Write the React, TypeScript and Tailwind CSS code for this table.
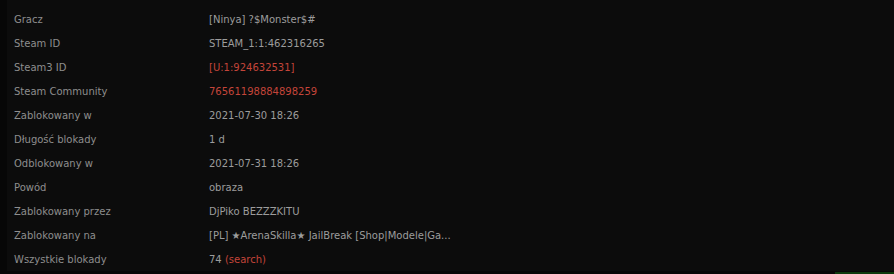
const rows: { label: string; value: React.ReactNode }[] = [
  { label: 'Gracz', value: '[Ninya] ?$Monster$#' },
  { label: 'Steam ID', value: 'STEAM_1:1:462316265' },
  { label: 'Steam3 ID', value: <span className="text-[#c4453a]">[U:1:924632531]</span> },
  { label: 'Steam Community', value: <span className="text-[#c4453a]">76561198884898259</span> },
  { label: 'Zablokowany w', value: '2021-07-30 18:26' },
  { label: 'Długość blokady', value: '1 d' },
  { label: 'Odblokowany w', value: '2021-07-31 18:26' },
  { label: 'Powód', value: 'obraza' },
  { label: 'Zablokowany przez', value: 'DjPiko BEZZZKITU' },
  { label: 'Zablokowany na', value: '[PL] ★ArenaSkilla★ JailBreak [Shop|Modele|Ga...' },
  {
    label: 'Wszystkie blokady',
    value: (
      <>
        74 <span className="text-[#c4453a]">(search)</span>
      </>
    ),
  },
];

export default function App() {
  return (
    <div className="w-[894px] h-[274px] bg-[#070707] flex flex-col overflow-hidden font-['DejaVu_Sans',sans-serif] text-[10px]">
      <div className="flex-1 ml-[7px] bg-[#0c0c0c] pt-[7px] pl-[7px]">
        {rows.map((row) => (
          <div key={row.label} className="flex h-6 items-center">
            <div className="w-[195px] shrink-0 text-[#8e8e8e]">{row.label}</div>
            <div className="text-[#9c9c9c] whitespace-nowrap">{row.value}</div>
          </div>
        ))}
      </div>
      <div className="h-[3px] flex justify-end">
        <div className="w-[59px] h-[2px] mt-[1px] bg-[#0d3a0d]" />
      </div>
    </div>
  );
}
